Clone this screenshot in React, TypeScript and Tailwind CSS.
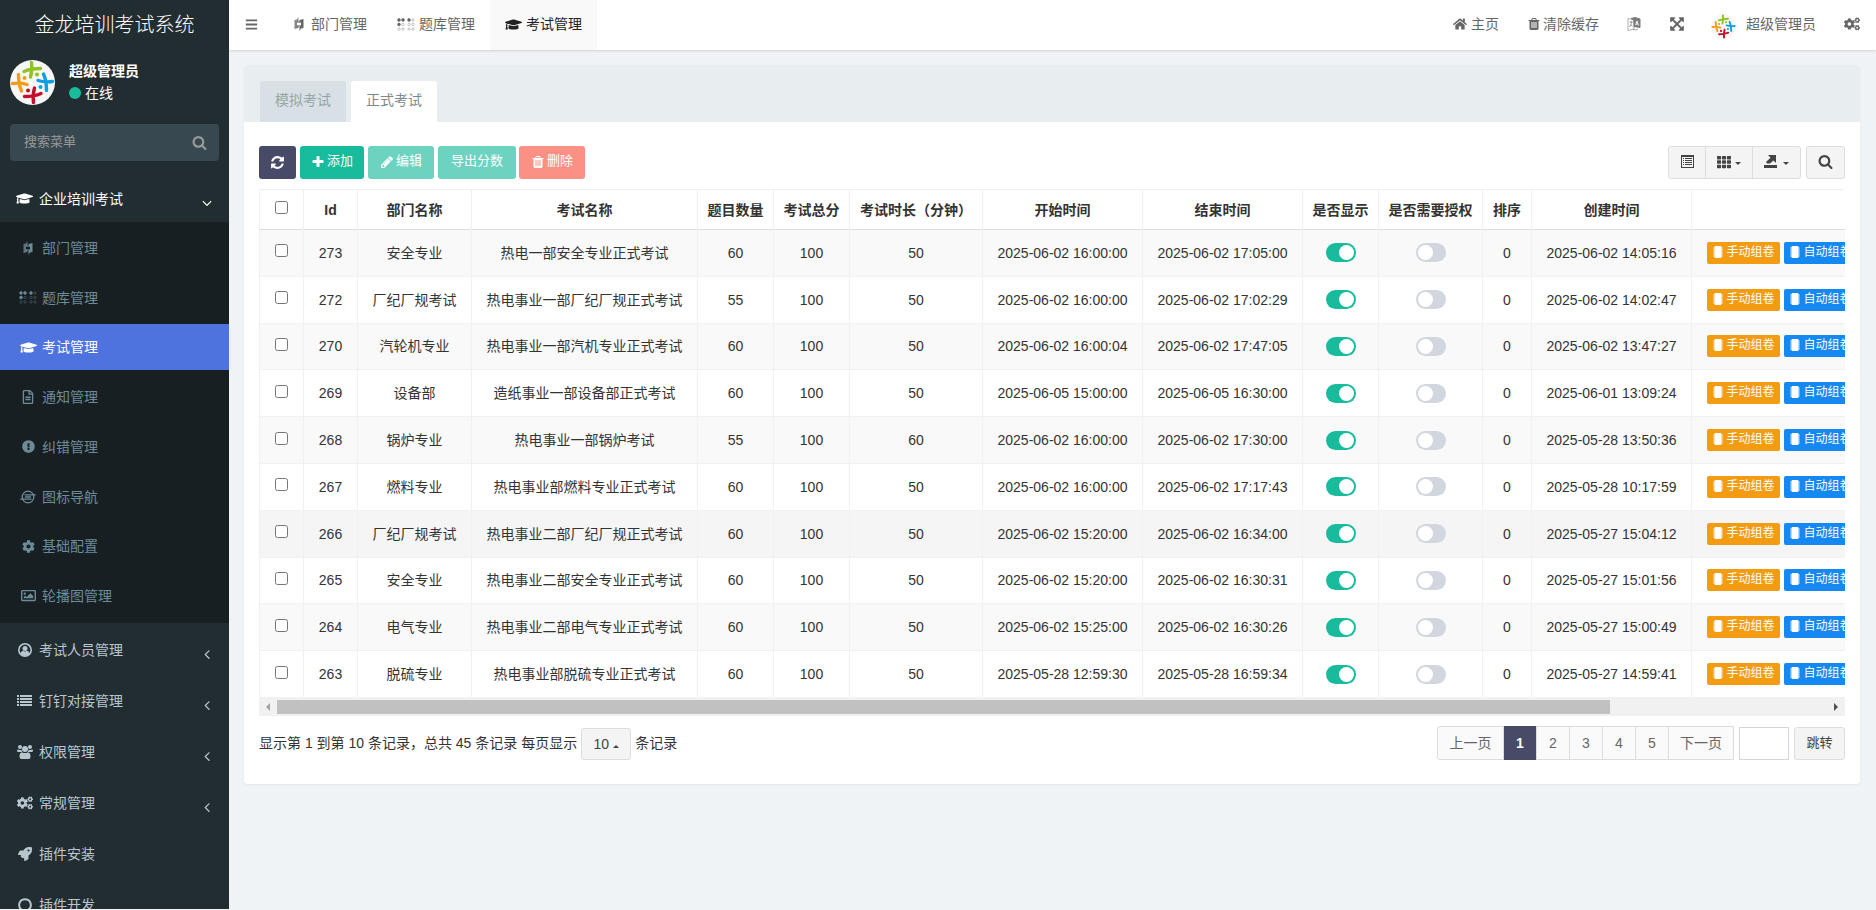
import { useState } from 'react';
import type { ReactNode } from 'react';
import { FaBars, FaGraduationCap, FaHome, FaCogs, FaRegFileAlt, FaExclamationCircle, FaCog, FaRegImage, FaRocket, FaTh } from 'react-icons/fa';

type Exam = {
  id: number;
  dept: string;
  name: string;
  count: number;
  minutes: number;
  start: string;
  end: string;
  created: string;
};

const EXAMS: Exam[] = [
  { id: 273, dept: '安全专业', name: '热电一部安全专业正式考试', count: 60, minutes: 50, start: '2025-06-02 16:00:00', end: '2025-06-02 17:05:00', created: '2025-06-02 14:05:16' },
  { id: 272, dept: '厂纪厂规考试', name: '热电事业一部厂纪厂规正式考试', count: 55, minutes: 50, start: '2025-06-02 16:00:00', end: '2025-06-02 17:02:29', created: '2025-06-02 14:02:47' },
  { id: 270, dept: '汽轮机专业', name: '热电事业一部汽机专业正式考试', count: 60, minutes: 50, start: '2025-06-02 16:00:04', end: '2025-06-02 17:47:05', created: '2025-06-02 13:47:27' },
  { id: 269, dept: '设备部', name: '造纸事业一部设备部正式考试', count: 60, minutes: 50, start: '2025-06-05 15:00:00', end: '2025-06-05 16:30:00', created: '2025-06-01 13:09:24' },
  { id: 268, dept: '锅炉专业', name: '热电事业一部锅炉考试', count: 55, minutes: 60, start: '2025-06-02 16:00:00', end: '2025-06-02 17:30:00', created: '2025-05-28 13:50:36' },
  { id: 267, dept: '燃料专业', name: '热电事业部燃料专业正式考试', count: 60, minutes: 50, start: '2025-06-02 16:00:00', end: '2025-06-02 17:17:43', created: '2025-05-28 10:17:59' },
  { id: 266, dept: '厂纪厂规考试', name: '热电事业二部厂纪厂规正式考试', count: 60, minutes: 50, start: '2025-06-02 15:20:00', end: '2025-06-02 16:34:00', created: '2025-05-27 15:04:12' },
  { id: 265, dept: '安全专业', name: '热电事业二部安全专业正式考试', count: 60, minutes: 50, start: '2025-06-02 15:20:00', end: '2025-06-02 16:30:31', created: '2025-05-27 15:01:56' },
  { id: 264, dept: '电气专业', name: '热电事业二部电气专业正式考试', count: 60, minutes: 50, start: '2025-06-02 15:25:00', end: '2025-06-02 16:30:26', created: '2025-05-27 15:00:49' },
  { id: 263, dept: '脱硫专业', name: '热电事业部脱硫专业正式考试', count: 60, minutes: 50, start: '2025-05-28 12:59:30', end: '2025-05-28 16:59:34', created: '2025-05-27 14:59:41' },
];

const COLUMNS = [
  { label: 'Id', width: 'w-[54px]' },
  { label: '部门名称', width: 'w-[114px]' },
  { label: '考试名称', width: 'w-[226px]' },
  { label: '题目数量', width: 'w-[76px]' },
  { label: '考试总分', width: 'w-[76px]' },
  { label: '考试时长（分钟）', width: 'w-[133px]' },
  { label: '开始时间', width: 'w-[160px]' },
  { label: '结束时间', width: 'w-[160px]' },
  { label: '是否显示', width: 'w-[76px]' },
  { label: '是否需要授权', width: 'w-[104px]' },
  { label: '排序', width: 'w-[49px]' },
  { label: '创建时间', width: 'w-[160px]' },
];

// 1792 网格的图标路径
const PATHS = {
  plus: 'M1600 736v192q0 40-28 68t-68 28h-416v416q0 40-28 68t-68 28h-192q-40 0-68-28t-28-68v-416h-416q-40 0-68-28t-28-68v-192q0-40 28-68t68-28h416v-416q0-40 28-68t68-28h192q40 0 68 28t28 68v416h416q40 0 68 28t28 68z',
  search: 'M1216 832q0-185-131.5-316.5t-316.5-131.5-316.5 131.5-131.5 316.5 131.5 316.5 316.5 131.5 316.5-131.5 131.5-316.5zm512 832q0 52-38 90t-90 38q-54 0-90-38l-343-342q-179 124-399 124-143 0-273.5-55.5t-225-150-150-225-55.5-273.5 55.5-273.5 150-225 225-150 273.5-55.5 273.5 55.5 225 150 150 225 55.5 273.5q0 220-124 399l343 343q37 37 37 90z',
  angleLeft: 'M1203 544q0 13-10 23l-393 393 393 393q10 10 10 23t-10 23l-50 50q-10 10-23 10t-23-10l-466-466q-10-10-10-23t10-23l466-466q10-10 23-10t23 10l50 50q10 10 10 23z',
  angleDown: 'M1395 736q0 13-10 23l-466 466q-10 10-23 10t-23-10l-466-466q-10-10-10-23t10-23l50-50q10-10 23-10t23 10l393 393 393-393q10-10 23-10t23 10l50 50q10 10 10 23z',
  circle: 'M896 352q-148 0-273 73t-198 198-73 273 73 273 198 198 273 73 273-73 198-198 73-273-73-273-198-198-273-73zm768 544q0 209-103 385.5t-279.5 279.5-385.5 103-385.5-103-279.5-279.5-103-385.5 103-385.5 279.5-279.5 385.5-103 385.5 103 279.5 279.5 103 385.5z',
  trash: 'M704 1376v-704q0-14-9-23t-23-9h-64q-14 0-23 9t-9 23v704q0 14 9 23t23 9h64q14 0 23-9t9-23zm256 0v-704q0-14-9-23t-23-9h-64q-14 0-23 9t-9 23v704q0 14 9 23t23 9h64q14 0 23-9t9-23zm256 0v-704q0-14-9-23t-23-9h-64q-14 0-23 9t-9 23v704q0 14 9 23t23 9h64q14 0 23-9t9-23zm-544-992h448l-48-117q-7-9-17-11h-317q-10 2-17 11zm928 32v64q0 14-9 23t-23 9h-96v948q0 83-47 143.5t-113 60.5h-832q-66 0-113-58.5t-47-141.5v-952h-96q-14 0-23-9t-9-23v-64q0-14 9-23t23-9h309l70-167q15-37 54-63t79-26h320q40 0 79 26t54 63l70 167h309q14 0 23 9t9 23z',
  pencil: 'M491 1536l91-91-235-235-91 91v107h128v128h107zm523-928q0-22-22-22-10 0-17 7l-542 542q-7 7-7 17 0 22 22 22 10 0 17-7l542-542q7-7 7-17zm-54-192l416 416-832 832h-416v-416zm683 96q0 53-37 90l-166 166-416-416 166-165q36-38 90-38 53 0 91 38l235 234q37 39 37 91z',
  expand: 'M1411 541l-355 355 355 355 144-144q29-31 70-14 39 17 39 59v448q0 26-19 45t-45 19h-448q-42 0-59-40-17-39 14-69l144-144-355-355-355 355 144 144q31 30 14 69-17 40-59 40h-448q-26 0-45-19t-19-45v-448q0-42 40-59 39-17 69 14l144 144 355-355-355-355-144 144q-19 19-45 19-12 0-24-5-40-17-40-59v-448q0-26 19-45t45-19h448q42 0 59 40 17 39-14 69l-144 144 355 355 355-355-144-144q-31-30-14-69 17-40 59-40h448q26 0 45 19t19 45v448q0 42-39 59-13 5-25 5-26 0-45-19z',
  refresh: 'M1639 1056q0 5-1 7-64 268-268 434.5t-478 166.5q-146 0-282.5-55t-243.5-157l-129 129q-19 19-45 19t-45-19-19-45v-448q0-26 19-45t45-19h448q26 0 45 19t19 45-19 45l-137 137q71 66 161 102t187 36q134 0 250-65t186-179q11-17 53-117 8-23 30-23h192q13 0 22.5 9.5t9.5 22.5zm25-800v448q0 26-19 45t-45 19h-448q-26 0-45-19t-19-45 19-45l138-138q-148-137-349-137-134 0-250 65t-186 179q-11 17-53 117-8 23-30 23h-199q-13 0-22.5-9.5t-9.5-22.5v-7q65-268 270-434.5t480-166.5q146 0 284 55.5t245 156.5l130-129q19-19 45-19t45 19 19 45z',
};

const SUB_MENU: { label: string; icon: ReactNode }[] = [
  { label: '部门管理', icon: <HouzzIcon /> },
  { label: '题库管理', icon: <BrailleIcon /> },
  { label: '考试管理', icon: <FaGraduationCap size={17} /> },
  { label: '通知管理', icon: <FaRegFileAlt size={14} /> },
  { label: '纠错管理', icon: <FaExclamationCircle size={13} /> },
  { label: '图标导航', icon: <IoxhostIcon /> },
  { label: '基础配置', icon: <FaCog size={13} /> },
  { label: '轮播图管理', icon: <FaRegImage size={15} /> },
];

const MENU: { label: string; icon: ReactNode; more?: boolean }[] = [
  { label: '考试人员管理', icon: <UserCircleIcon />, more: true },
  { label: '钉钉对接管理', icon: <ListIcon />, more: true },
  { label: '权限管理', icon: <UsersIcon />, more: true },
  { label: '常规管理', icon: <FaCogs size={16} />, more: true },
  { label: '插件安装', icon: <FaRocket size={14} /> },
  { label: '插件开发', icon: <Icon name="circle" className="size-4" /> },
];

export default function App() {
  return (
    <div className="flex h-screen overflow-hidden bg-[#eff3f6] font-['Liberation_Sans','Noto_Sans_CJK_SC',sans-serif] text-sm text-[#333]">
      <Sidebar />
      <div className="flex min-w-0 flex-1 flex-col">
        <TopBar />
        <main className="p-[15px] pr-4">
          <ExamPanel />
        </main>
      </div>
    </div>
  );
}

function Sidebar() {
  return (
    <aside className="h-[calc(100vh-1px)] w-[229px] shrink-0 overflow-hidden bg-[#222d32] text-[#b8c7ce]">
      <a href="#" className="flex h-[50px] items-center justify-center text-xl font-light text-white">金龙培训考试系统</a>

      <div className="flex gap-3.5 px-2.5 pt-2.5 text-white">
        <Logo className="size-[45px]" />
        <div className="leading-[22px]">
          <p className="font-bold">超级管理员</p>
          <a href="#" className="flex items-center gap-1">
            <span className="size-3 rounded-full bg-[#18bc9c]" />在线
          </a>
        </div>
      </div>

      <form className="mx-2.5 mt-[19px] flex h-[37px] items-center rounded bg-[#374850] text-[#999]">
        <input type="text" aria-label="搜索菜单" placeholder="搜索菜单"
          className="min-w-0 flex-1 bg-transparent px-3.5 text-[13px] outline-none placeholder:text-[#999]" />
        <button type="button" aria-label="搜索" className="px-3"><Icon name="search" /></button>
      </form>

      <nav>
        <a href="#" className="mt-4 flex h-[45px] items-center pr-3.5 pb-0.5 pl-4 text-white">
          <span className="mr-1.5 flex w-[17px] justify-center"><FaGraduationCap size={17} /></span>
          <span className="flex-1">企业培训考试</span>
          <Icon name="angleDown" className="mt-2 size-4" />
        </a>
        <ul className="flex h-[401px] flex-col justify-between bg-[#181f23] pt-[3px] pb-1">
          {SUB_MENU.map((m) => (
            <li key={m.label}>
              <a href="#" className={`flex h-[46px] items-center pl-[19px] ${m.label === '考试管理' ? 'bg-[#4e73df] text-white' : 'text-[#6c8b98]'}`}>
                <span className="mr-[5px] flex w-[18px] justify-center">{m.icon}</span>
                {m.label}
              </a>
            </li>
          ))}
        </ul>
        <ul className="pt-px">
          {MENU.map((m) => (
            <li key={m.label}>
              <a href="#" className="flex h-[51px] items-center pr-3.5 pl-4">
                <span className="mr-1.5 flex w-[17px] justify-center">{m.icon}</span>
                <span className="flex-1">{m.label}</span>
                {m.more && <Icon name="angleLeft" className="mt-2 size-4" />}
              </a>
            </li>
          ))}
        </ul>
      </nav>
    </aside>
  );
}

function TopBar() {
  return (
    <header className="flex h-[50px] shrink-0 items-stretch bg-white text-[#666] shadow-sm">
      <button type="button" aria-label="切换菜单" className="mr-px px-4 pb-0.5"><FaBars size={13} /></button>
      <nav className="flex items-stretch">
        <NavTab icon={<HouzzIcon />} label="部门管理" />
        <NavTab icon={<BrailleIcon />} label="题库管理" />
        <NavTab icon={<FaGraduationCap size={17} />} label="考试管理" active />
      </nav>
      <div className="ml-auto flex items-center pr-4 pb-0.5">
        <a href="#" className="mr-7 flex items-center gap-1"><FaHome size={14} />主页</a>
        <a href="#" className="mr-7 flex items-center gap-0.5"><Icon name="trash" className="size-3.5" />清除缓存</a>
        <button type="button" aria-label="语言" className="mr-7"><LanguageIcon /></button>
        <button type="button" aria-label="全屏" className="mr-[26px]"><Icon name="expand" className="size-4" /></button>
        <a href="#" className="mr-7 flex items-center gap-2.5"><Logo className="mt-1 size-[25px]" />超级管理员</a>
        <button type="button" aria-label="设置"><FaCogs size={16} /></button>
      </div>
    </header>
  );
}

function NavTab({ icon, label, active }: { icon: ReactNode; label: string; active?: boolean }) {
  return (
    <a href="#" className={`flex items-center gap-1 px-[15px] pb-0.5 ${active ? 'bg-[#f9f9f9] text-[#222]' : ''}`}>
      <span className="flex min-w-[17px] justify-center">{icon}</span>{label}
    </a>
  );
}

function ExamPanel() {
  const [selected, setSelected] = useState<number[]>([]);

  const toggle = (id: number) =>
    setSelected((s) => (s.includes(id) ? s.filter((v) => v !== id) : [...s, id]));

  return (
    <section className="rounded bg-white shadow-xs">
      <div className="flex h-[57px] items-end gap-[5px] rounded-t bg-[#e8edf0] px-4">
        <button type="button" className="h-[41px] rounded-t-[3px] bg-[#d8dfe5] px-[15px] pb-[3px] text-[#95a5a6]">模拟考试</button>
        <button type="button" className="h-[41px] rounded-t-[3px] bg-white px-[15px] pb-[3px] text-[#7b8a8b]">正式考试</button>
      </div>

      <div className="px-[15px] pt-6 pb-6">
        {/* 工具栏 */}
        <div className="mb-2.5 flex h-[33px] text-[13px] text-white">
          <button type="button" aria-label="刷新" className="mr-1 flex w-[37px] items-center justify-center rounded-[3px] bg-[#474b68]"><Icon name="refresh" /></button>
          <ToolBtn className="mr-1 bg-[#18bc9c] px-[11px]"><Icon name="plus" className="size-3.5" />添加</ToolBtn>
          <ToolBtn className="mr-1 bg-[#6bd3c0] px-3"><Icon name="pencil" className="size-3.5" />编辑</ToolBtn>
          <ToolBtn className="mr-[3px] bg-[#6bd3c0] px-[13px]">导出分数</ToolBtn>
          <ToolBtn className="bg-[#fb9085] px-3"><Icon name="trash" className="size-3.5" />删除</ToolBtn>

          <div className="ml-auto flex divide-x divide-[#ddd] rounded-[3px] border border-[#ddd] bg-[#f4f4f4] text-[#444]">
            <button type="button" aria-label="切换" className="flex w-[37px] items-center justify-center pb-0.5"><ListAltIcon /></button>
            <button type="button" aria-label="列" className="flex w-[47px] items-center justify-center gap-1 pb-0.5"><FaTh size={14} /><Caret /></button>
            <button type="button" aria-label="导出数据" className="flex w-[47px] items-center justify-center gap-1.5 pb-0.5"><ExportIcon /><Caret /></button>
          </div>
          <button type="button" aria-label="普通搜索" className="ml-[5px] flex w-[39px] items-center justify-center rounded-[3px] border border-[#ddd] bg-[#f4f4f4] pb-0.5 text-[#444]">
            <Icon name="search" />
          </button>
        </div>

        <div className="overflow-hidden">
          <table className="h-[509px] w-[1846px] table-fixed border-collapse border border-[#f1f1f1] text-center whitespace-nowrap">
            <thead>
              <tr className="h-10 border-b border-[#ddd]">
                <th className="w-11 border-r border-[#f1f1f1]">
                  <input type="checkbox" aria-label="全选" className="mx-auto mb-1 block size-[13px]"
                    checked={selected.length === EXAMS.length}
                    onChange={() => setSelected(selected.length === EXAMS.length ? [] : EXAMS.map((e) => e.id))} />
                </th>
                {COLUMNS.map((c) => (
                  <th key={c.label} className={`border-r border-[#f1f1f1] font-bold ${c.width}`}>{c.label}</th>
                ))}
                <th aria-label="操作" />
              </tr>
            </thead>
            <tbody>
              {EXAMS.map((e) => (
                <tr key={e.id} className={`border-b border-[#f1f1f1] ${e.id === 266 ? 'bg-[#f5f5f5]' : 'odd:bg-[#f9f9f9]'}`}>
                  <Cell>
                    <input type="checkbox" aria-label={`选择 ${e.id}`} className="mx-auto mb-1 block size-[13px]"
                      checked={selected.includes(e.id)} onChange={() => toggle(e.id)} />
                  </Cell>
                  <Cell>{e.id}</Cell>
                  <Cell>{e.dept}</Cell>
                  <Cell>{e.name}</Cell>
                  <Cell>{e.count}</Cell>
                  <Cell>100</Cell>
                  <Cell>{e.minutes}</Cell>
                  <Cell>{e.start}</Cell>
                  <Cell>{e.end}</Cell>
                  <Cell><Toggle label="是否显示" initial /></Cell>
                  <Cell><Toggle label="是否需要授权" /></Cell>
                  <Cell>0</Cell>
                  <Cell>{e.created}</Cell>
                  <Cell>
                    <div className="flex gap-1 pl-[15px] text-xs text-white">
                      <RowBtn className="bg-[#f39c12]">手动组卷</RowBtn>
                      <RowBtn className="bg-[#1688f1]">自动组卷</RowBtn>
                    </div>
                  </Cell>
                </tr>
              ))}
            </tbody>
          </table>
        </div>

        {/* 横向滚动条 */}
        <div className="flex h-[18px] items-center bg-[#f1f1f1]">
          <span className="flex w-[18px] justify-center"><span className="border-y-4 border-r-4 border-y-transparent border-r-[#a3a3a3]" /></span>
          <div className="flex-1"><div className="h-3.5 w-[86%] bg-[#c1c1c1]" /></div>
          <span className="flex w-[18px] justify-center"><span className="border-y-4 border-l-4 border-y-transparent border-l-[#505050]" /></span>
        </div>

        <div className="mt-2.5 flex h-[34px] items-center">
          <span>显示第 1 到第 10 条记录，总共 45 条记录 每页显示</span>
          <button type="button" className="mx-1 mt-0.5 flex h-8 w-[50px] items-center justify-center gap-1 rounded-[3px] border border-[#ddd] bg-[#f4f4f4] text-[#444]">
            10<Caret up />
          </button>
          <span>条记录</span>

          <Pagination />
        </div>
      </div>
    </section>
  );
}

function Pagination() {
  const [page, setPage] = useState(1);

  return (
    <div className="ml-auto flex items-center">
      <div className="flex h-[34px] divide-x divide-[#ddd] rounded-l-[3px] border border-[#ddd] bg-[#fafafa] text-[#666]">
        <button type="button" className="w-[66px]" onClick={() => setPage(Math.max(1, page - 1))}>上一页</button>
        {[1, 2, 3, 4, 5].map((n) => (
          <button key={n} type="button" onClick={() => setPage(n)}
            className={`w-[33px] ${n === page ? '-my-px bg-[#474b68] font-bold text-white' : ''}`}>
            {n}
          </button>
        ))}
        <button type="button" className="w-16" onClick={() => setPage(Math.min(5, page + 1))}>下一页</button>
      </div>
      <input type="text" aria-label="页码" className="ml-[5px] h-[33px] w-[50px] border border-[#d2d6de] bg-white px-2" />
      <button type="button" className="mt-px ml-[5px] h-[33px] w-[51px] rounded-[3px] border border-[#ddd] bg-[#f4f4f4] text-[13px] text-[#444]">跳转</button>
    </div>
  );
}

function Cell({ children }: { children: ReactNode }) {
  return <td className="h-[46px] border-r border-[#f1f1f1] p-0">{children}</td>;
}

function ToolBtn({ children, className = '' }: { children: ReactNode; className?: string }) {
  return <button type="button" className={`flex items-center gap-0.5 rounded-[3px] pb-0.5 ${className}`}>{children}</button>;
}

function RowBtn({ children, className = '' }: { children: ReactNode; className?: string }) {
  return (
    <button type="button" className={`flex h-[22px] w-[73px] items-center justify-center gap-0.5 rounded-[2px] pb-0.5 ${className}`}>
      <ChipIcon />{children}
    </button>
  );
}

function Toggle({ label, initial = false }: { label: string; initial?: boolean }) {
  const [on, setOn] = useState(initial);
  return (
    <button type="button" role="switch" aria-checked={on} aria-label={label} onClick={() => setOn(!on)}
      className={`mx-auto flex h-[19px] w-[30px] items-center rounded-full px-0.5 ${on ? 'justify-end bg-[#18bc9c]' : 'bg-[#d2d6de]'}`}>
      <span className="size-[15px] rounded-full bg-white" />
    </button>
  );
}

function Icon({ name, className = 'size-[15px]' }: { name: keyof typeof PATHS; className?: string }) {
  return (
    <svg viewBox="0 0 1792 1792" className={className} fill="currentColor">
      <path d={PATHS[name]} />
    </svg>
  );
}

function Caret({ up }: { up?: boolean }) {
  return (
    <svg viewBox="0 0 6 3" className="mt-1 h-[3px] w-1.5" fill="currentColor">
      <path d={up ? 'M0 3L3 0L6 3Z' : 'M0 0L3 3L6 0Z'} />
    </svg>
  );
}

// 一个伸开双臂的小人，旋转四次组成标志
const PERSON = 'M-1 -20 Q0 -12 -2 -5.5 M-8.5 -11 Q-2 -14 8 -14';

function Logo({ className = '' }: { className?: string }) {
  return (
    <svg viewBox="-22.5 -22.5 45 45" className={`shrink-0 rounded-full bg-[#f7f7f7] ${className}`}>
      {[['#8fc31f', 0], ['#0f9ee0', 90], ['#c0112b', 180], ['#f39c12', 270]].map(([color, deg]) => (
        <g key={deg} transform={`rotate(${deg})`}>
          <path d={PERSON} fill="none" stroke={String(color)} strokeWidth="3.4" strokeLinecap="round" />
          <circle cx="4.500" cy="-8" r="2" fill={String(color)} />
        </g>
      ))}
    </svg>
  );
}

function HouzzIcon() {
  return (
    <svg viewBox="0 0 10 14" className="h-3.5 w-2.5" fill="currentColor">
      <path d="M4.5 0V4.5L3 5.500V8.500H4.500V11L0.500 12V3L3 2.500Z" opacity=".8" />
      <path d="M5.500 14V9.500L7 8.500V5.500H5.500V3L9.500 2V11L7 11.500Z" />
      <path d="M3 4.500H7V5.500H3ZM3 8.500H7V9.500H3Z" />
    </svg>
  );
}

function BrailleIcon() {
  const filled = ['0-0', '1-0', '2-0', '0-1'];
  return (
    <svg viewBox="0 0 18 13" className="h-[13px] w-[18px]" stroke="currentColor" strokeWidth=".6">
      {[2, 6, 12, 16].map((x, col) =>
        [2, 6.5, 11].map((y, row) => {
          const on = filled.includes(`${col}-${row}`);
          return <circle key={`${x}-${y}`} cx={x} cy={y} r={on ? 1.4 : 1.2} fill={on ? 'currentColor' : 'none'} opacity={on ? 1 : 0.6} />;
        }),
      )}
    </svg>
  );
}

function IoxhostIcon() {
  return (
    <svg viewBox="0 0 16 14" className="h-3.5 w-4" fill="none" stroke="currentColor" strokeWidth="1.3" strokeLinecap="round">
      <circle cx="8" cy="7" r="5.8" />
      <path d="M5 4.800H15.200M5.500 7H10.500M0.800 9.200H11" />
    </svg>
  );
}

function UserCircleIcon() {
  return (
    <svg viewBox="0 0 14 14" className="size-3.5" fill="currentColor">
      <circle cx="7" cy="7" r="6.200" fill="none" stroke="currentColor" strokeWidth="1.600" />
      <circle cx="7" cy="5.500" r="2.500" />
      <path d="M2.500 10.500Q3 8 5 7.800Q7 9.200 9 7.800Q11 8 11.500 10.500Q9.500 13 7 13T2.500 10.500Z" />
    </svg>
  );
}

function ListIcon() {
  return (
    <svg viewBox="0 0 15 11" className="h-[11px] w-[15px]" fill="currentColor">
      <path d="M0 0H2V2H0ZM3 0H15V2H3ZM0 3H2V5H0ZM3 3H15V5H3ZM0 6H2V8H0ZM3 6H15V8H3ZM0 9H2V11H0ZM3 9H15V11H3Z" />
    </svg>
  );
}

function UsersIcon() {
  return (
    <svg viewBox="0 0 16 14" className="h-3.5 w-4" fill="currentColor">
      <circle cx="3" cy="2" r="2" />
      <circle cx="13" cy="2" r="2" />
      <circle cx="8" cy="4" r="3" />
      <path d="M1 4.500Q3 5.500 4.300 4.500Q4.500 6 5.500 7H1.500Q0 7 0 5.800Q0 4.300 1 4.500ZM15 4.500Q13 5.500 11.700 4.500Q11.500 6 10.500 7H14.500Q16 7 16 5.800Q16 4.300 15 4.500Z" />
      <path d="M5 7.200Q8 9 11 7.200Q13.500 7.500 13.500 11.800Q13.500 14 11.500 14H4.500Q2.500 14 2.500 11.800Q2.500 7.500 5 7.200Z" />
    </svg>
  );
}

function ChipIcon() {
  return (
    <svg viewBox="0 0 12 12" className="size-3" fill="currentColor">
      <rect x="2.500" y="0" width="7" height="12" rx="1" />
      <path d="M1 1.500H11V2.500H1ZM1 3.500H11V4.500H1ZM1 5.500H11V6.500H1ZM1 7.500H11V8.500H1ZM1 9.500H11V10.500H1Z" opacity=".7" />
    </svg>
  );
}

function LanguageIcon() {
  return (
    <svg viewBox="0 0 14 14" className="size-3.5" fill="none" stroke="currentColor" strokeWidth="1">
      <path d="M1 1.500L7 3V12L1 13.500Z" opacity=".5" />
      <path d="M2.500 5H6M4.500 4Q4.500 8 2.500 10M3.500 7.500L5.500 9.500" opacity=".6" />
      <path d="M4 1.500L8 .5L13 2V10.500L7 9.500V3Z" fill="currentColor" opacity=".85" />
      <path d="M8.500 8L10 4L11.500 8.500M9 7H11" stroke="#fff" strokeWidth=".9" />
      <path d="M6 12.500Q9 13.500 11 12" opacity=".6" />
    </svg>
  );
}

function ListAltIcon() {
  return (
    <svg viewBox="0 0 13 13" className="size-[13px]" fill="currentColor">
      <path d="M0 0H13V13H0ZM1 2V12H12V2Z" fillRule="evenodd" />
      <path d="M2 3H3V4H2ZM4 3H11V4H4ZM2 5H3V6H2ZM4 5H11V6H4ZM2 7H3V8H2ZM4 7H11V8H4ZM2 9H3V10H2ZM4 9H11V10H4Z" />
    </svg>
  );
}

function ExportIcon() {
  return (
    <svg viewBox="0 0 13 13" className="size-[13px]" fill="currentColor">
      <path d="M0 10H13V13H0ZM4 0H12V8L9.500 5.500L6 8.500L3 8.500L2 7L6.500 2.700Z" />
    </svg>
  );
}
